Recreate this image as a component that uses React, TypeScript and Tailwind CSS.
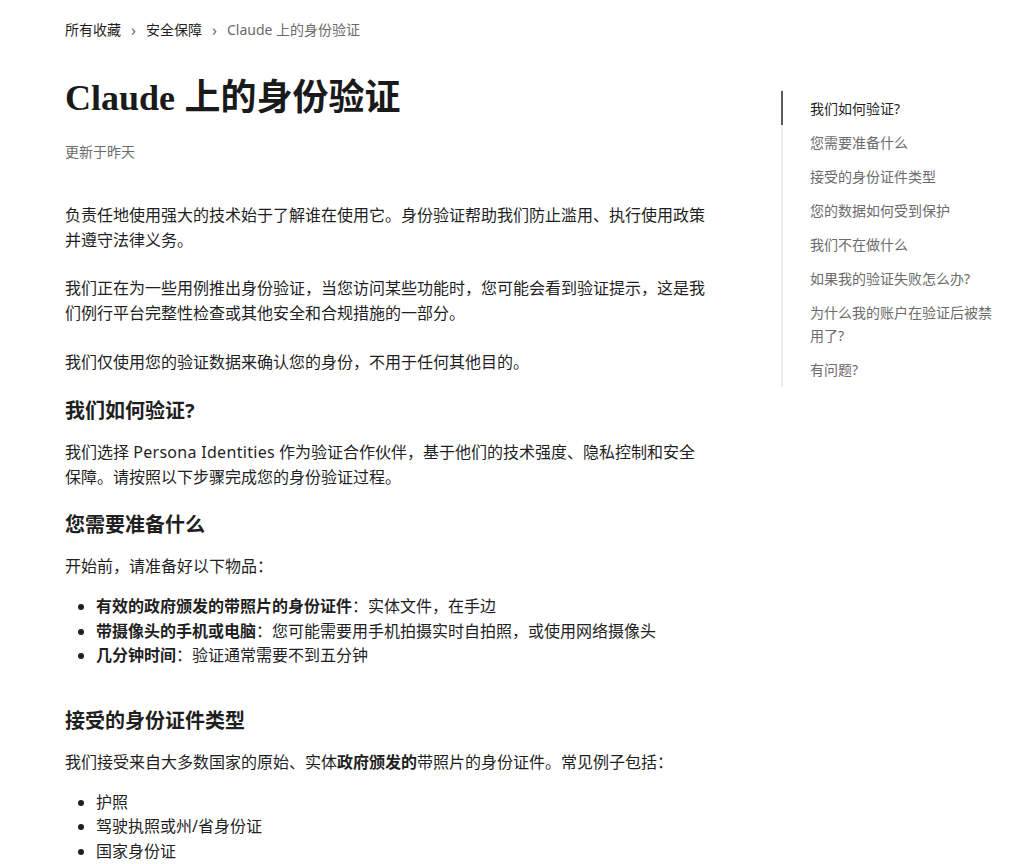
import React from "react";

const sans = { fontFamily: '"Noto Sans", "Noto Sans CJK SC", sans-serif' };

const toc = [
  "我们如何验证?",
  "您需要准备什么",
  "接受的身份证件类型",
  "您的数据如何受到保护",
  "我们不在做什么",
  "如果我的验证失败怎么办?",
  "为什么我的账户在验证后被禁用了?",
  "有问题?",
];

export default function App() {
  return (
    <div className="min-h-[864px] bg-white text-[#1f1f1f] overflow-hidden" style={sans}>
      <div className="flex pl-[65px]">
        <div className="w-[641px] shrink-0">
          <nav className="pt-5 flex items-center text-sm leading-5">
            <span className="text-[#1f1f1f]">所有收藏</span>
            <span className="mx-[10px] text-[#6b6b6b] text-base leading-5">›</span>
            <span className="text-[#1f1f1f]">安全保障</span>
            <span className="mx-[10px] text-[#6b6b6b] text-base leading-5">›</span>
            <span className="text-[#6b6b6b]">Claude 上的身份验证</span>
          </nav>

          <h1 className="mt-[32px] text-[36px] leading-[44px] font-bold text-[#1a1a1a]">
            <span className="font-bold" style={{ fontFamily: '"Liberation Serif", serif' }}>Claude</span>{" "}
            <span style={{ fontFamily: '"Noto Sans CJK SC", sans-serif' }}>上的身份验证</span>
          </h1>

          <div className="mt-[22px] text-sm leading-5 text-[#6b6b6b]">更新于昨天</div>

          <div className="text-base leading-[25px]">
            <p className="mt-[41px]">负责任地使用强大的技术始于了解谁在使用它。身份验证帮助我们防止滥用、执行使用政策并遵守法律义务。</p>
            <p className="mt-[23px]">我们正在为一些用例推出身份验证，当您访问某些功能时，您可能会看到验证提示，这是我们例行平台完整性检查或其他安全和合规措施的一部分。</p>
            <p className="mt-[24px]">我们仅使用您的验证数据来确认您的身份，不用于任何其他目的。</p>

            <h2 className="mt-[22px] text-xl leading-7 font-bold">我们如何验证?</h2>
            <p className="mt-[15px]">我们选择 <span className="tracking-[0.3px]">Persona Identities</span> 作为验证合作伙伴，基于他们的技术强度、隐私控制和安全保障。请按照以下步骤完成您的身份验证过程。</p>

            <h2 className="mt-[21px] text-xl leading-7 font-bold">您需要准备什么</h2>
            <p className="mt-[15px]">开始前，请准备好以下物品：</p>
            <ul className="mt-[15px] list-disc pl-[31px] leading-[24.5px]">
              <li><strong>有效的政府颁发的带照片的身份证件</strong>：实体文件，在手边</li>
              <li><strong>带摄像头的手机或电脑</strong>：您可能需要用手机拍摄实时自拍照，或使用网络摄像头</li>
              <li><strong>几分钟时间</strong>：验证通常需要不到五分钟</li>
            </ul>

            <h2 className="mt-[39px] text-xl leading-7 font-bold">接受的身份证件类型</h2>
            <p className="mt-[15px]">我们接受来自大多数国家的原始、实体<strong>政府颁发的</strong>带照片的身份证件。常见例子包括：</p>
            <ul className="mt-[15px] list-disc pl-[31px] leading-[24.5px]">
              <li>护照</li>
              <li>驾驶执照或州/省身份证</li>
              <li>国家身份证</li>
            </ul>
          </div>
        </div>

        <aside className="ml-[75px] mt-[90px] w-[225px] shrink-0 self-start border-l-2 border-[#ececec]">
          <ul className="text-sm leading-[23px] py-px">
            {toc.map((t, i) => (
              <li
                key={t}
                className={
                  i === 0
                    ? "-ml-[2px] border-l-2 border-[#5a5a5a] pl-[27px] pr-[6px] py-[5.5px] text-[#1f1f1f]"
                    : "-ml-[2px] border-l-2 border-transparent pl-[27px] pr-[6px] py-[5.5px] text-[#6b6b6b]"
                }
              >
                {t}
              </li>
            ))}
          </ul>
        </aside>
      </div>
    </div>
  );
}
